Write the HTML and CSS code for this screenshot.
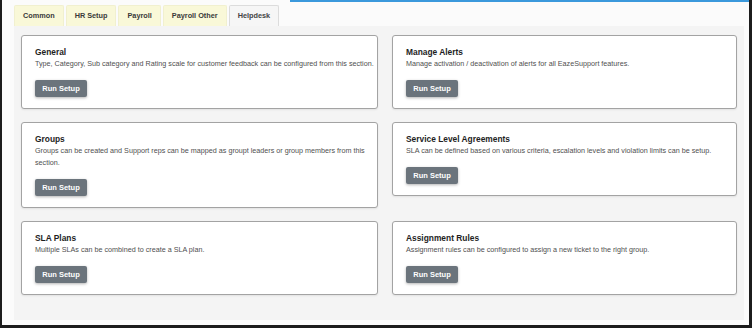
FILE: index.html
```html
<!DOCTYPE html>
<html lang="en">
<head>
<meta charset="UTF-8">
<meta name="viewport" content="width=device-width, initial-scale=1.0">
<title>Setup - Helpdesk</title>
<link rel="stylesheet" href="styles.css">
</head>
<body>

<div class="frame">

  <!-- module tabs -->
  <ul class="tabs">
    <li class="tab">Common</li>
    <li class="tab">HR Setup</li>
    <li class="tab">Payroll</li>
    <li class="tab">Payroll Other</li>
    <li class="tab active">Helpdesk</li>
  </ul>

  <div class="panel">
    <div class="grid">

      <div class="card">
        <h3>General</h3>
        <p>Type, Category, Sub category and Rating scale for customer feedback can be configured from this section.</p>
        <button class="btn">Run Setup</button>
      </div>

      <div class="card">
        <h3>Manage Alerts</h3>
        <p>Manage activation / deactivation of alerts for all EazeSupport features.</p>
        <button class="btn">Run Setup</button>
      </div>

      <div class="card">
        <h3>Groups</h3>
        <p>Groups can be created and Support reps can be mapped as groupt leaders or group members from this section.</p>
        <button class="btn">Run Setup</button>
      </div>

      <div class="card">
        <h3>Service Level Agreements</h3>
        <p>SLA can be defined based on various criteria, escalation levels and violation limits can be setup.</p>
        <button class="btn">Run Setup</button>
      </div>

      <div class="card">
        <h3>SLA Plans</h3>
        <p>Multiple SLAs can be combined to create a SLA plan.</p>
        <button class="btn">Run Setup</button>
      </div>

      <div class="card">
        <h3>Assignment Rules</h3>
        <p>Assignment rules can be configured to assign a new ticket to the right group.</p>
        <button class="btn">Run Setup</button>
      </div>

    </div>
  </div>

</div>

</body>
</html>
```

FILE: styles.css
```css
* {
  box-sizing: border-box;
}

body {
  margin: 0;
  background-color: #fff;
  font-family: "Liberation Sans", Arial, sans-serif;
  color: #333;
}

.frame {
  width: 752px;
  height: 328px;
  border-left: 2px solid #1c1c1c;
  border-right: 3px solid #1c1c1c;
  border-bottom: 3px solid #1c1c1c;
  padding: 5px 5px 0 12px;
  /* blue line at the top right */
  background: linear-gradient(to right, transparent 288px, #3b99dc 288px) top / 100% 2px no-repeat, #fbfbfb;
}

.tabs {
  list-style: none;
  margin: 0;
  padding: 0;
  display: flex;
  gap: 2px;
  height: 21px;
}
.tab {
  padding: 0 8px;
  line-height: 20px;
  font-size: 7.3px;
  font-weight: bold;
  color: #3a3a3a;
  background-color: #f9f8d8;
  border: 1px solid #f1f0cf;
  border-bottom: none;
  border-radius: 2px 2px 0 0;
}
.tab.active {
  background-color: #f6f6f6;
  border-color: #dcdcdc;
  color: #444;
}

.panel {
  width: 730px;
  height: 294px;
  background-color: #f4f4f4;
  padding: 9px 6px 0 7px;
}

.grid {
  display: grid;
  grid-template-columns: 357px 345px;
  column-gap: 14px;
  row-gap: 13px;
  align-items: start;
}

.card {
  background-color: #fff;
  border: 1px solid #a3a3a3;
  border-radius: 3px;
  padding: 11px 2px 11px 13px;
  box-shadow: 0 1px 2px rgba(0, 0, 0, 0.08);
}
.card h3 {
  margin: 0;
  font-size: 8.4px;
  line-height: 11px;
  color: #1e1e1e;
}
.card p {
  margin: 0;
  padding-right: 8px;
  font-size: 7.2px;
  line-height: 12px;
  color: #4f4f4f;
}
.card:nth-child(odd) p {
  padding-right: 0;
}

.btn {
  display: block;
  margin-top: 10px;
  width: 52px;
  height: 17px;
  padding: 0;
  border: none;
  border-radius: 2px;
  background-color: #6b747c;
  color: #fff;
  font-family: inherit;
  font-size: 7.5px;
  font-weight: bold;
  box-shadow: 0 1px 3px rgba(0, 0, 0, 0.3);
}
```
